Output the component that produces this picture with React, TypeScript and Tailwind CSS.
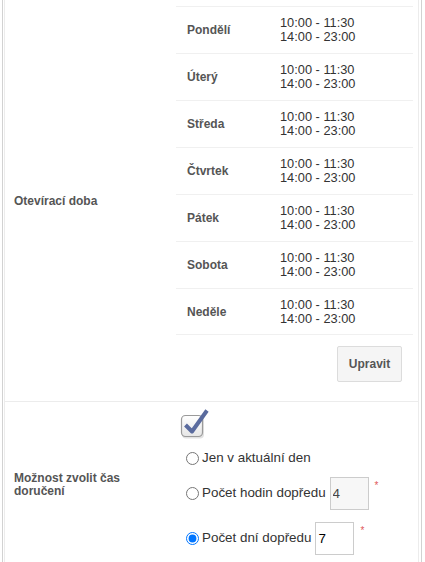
import React from "react";

const days = ["Pondělí", "Úterý", "Středa", "Čtvrtek", "Pátek", "Sobota", "Neděle"];

const CheckIcon = () => (
  <svg width="32" height="32" viewBox="0 0 32 32" className="block">
    <defs>
      <linearGradient id="cbg" x1="0" y1="0" x2="0" y2="1">
        <stop offset="0" stopColor="#ffffff" />
        <stop offset="1" stopColor="#e6e6e6" />
      </linearGradient>
    </defs>
    <rect x="4" y="9.5" width="22" height="22" rx="4" fill="#cfcfcf" opacity="0.6" />
    <rect x="3.5" y="8.5" width="21" height="21" rx="4" fill="url(#cbg)" stroke="#9a9a9a" strokeWidth="1.2" />
    <path d="M7.5 18 L14 24.5 L29 3.5" fill="none" stroke="#5a6b9e" strokeWidth="4" strokeLinejoin="round" />
  </svg>
);

const Radio = ({ checked }: { checked?: boolean }) => (
  <input type="radio" readOnly checked={!!checked} className="m-0 w-[13px] h-[13px] shrink-0" />
);

export default function App() {
  return (
    <div className="h-[562px] overflow-hidden bg-white font-['Liberation_Sans',Arial,sans-serif]">
      <div className="ml-[2px] w-[420px] border-x border-[#d2d2d2] pl-[1px] pr-[2px]">
        <div className="border-x border-[#ececec]">
          {/* Opening hours */}
          <div className="flex border-b border-[#ececec]">
            <div className="w-[171px] flex items-center pl-[9px] text-[12px] font-bold text-[#555]">
              Otevírací doba
            </div>
            <div className="flex-1 pr-[5px]">
              <div className="h-[6px]" />
              {days.map((d, i) => (
                <div
                  key={d}
                  className={`flex items-center h-[47px] border-t border-[#f0f0f0] ${i === days.length - 1 ? "border-b" : ""}`}
                >
                  <div className="w-[104px] pl-[11px] text-[12px] font-bold text-[#555]">{d}</div>
                  <div className="text-[12.8px] leading-[14px] text-[#333]">
                    <div>10:00 - 11:30</div>
                    <div>14:00 - 23:00</div>
                  </div>
                </div>
              ))}
              <div className="flex justify-end pt-[11px] pb-[19px] pr-[11px]">
                <button className="w-[65px] h-[36px] bg-[#f5f5f5] border border-[#dcdcdc] rounded-[2px] text-[12px] font-bold text-[#555]">
                  Upravit
                </button>
              </div>
            </div>
          </div>

          {/* Delivery time */}
          <div className="flex">
            <div className="w-[171px] flex items-center pl-[9px] pr-[20px] text-[12px] leading-[13px] font-bold text-[#555]">
              Možnost zvolit čas doručení
            </div>
            <div className="flex-1 pt-[5px] pb-[13px]">
              <div className="ml-[2px]">
                <CheckIcon />
              </div>
              <div className="flex items-center h-[20px] mt-[9px] ml-[10px] text-[13.4px] text-[#333]">
                <Radio />
                <span className="ml-[3px]">Jen v aktuální den</span>
              </div>
              <div className="flex items-center h-[33px] mt-[9px] ml-[10px] text-[13.4px] text-[#333]">
                <Radio />
                <span className="ml-[3px]">Počet hodin dopředu</span>
                <input
                  readOnly
                  value="4"
                  className="ml-[4px] w-[39px] h-[33px] border border-[#cccccc] bg-[#f7f7f7] px-[2px] text-[13.4px] text-[#444] outline-none"
                />
                <span className="self-start ml-[6px] mt-[1px] text-[10px] text-[#e05a5a]">*</span>
              </div>
              <div className="flex items-center h-[33px] mt-[12px] ml-[10px] text-[13.4px] text-[#333]">
                <Radio checked />
                <span className="ml-[3px]">Počet dní dopředu</span>
                <input
                  readOnly
                  value="7"
                  className="ml-[4px] w-[39px] h-[33px] border border-[#cccccc] bg-white px-[2px] text-[13.4px] text-black outline-none"
                />
                <span className="self-start ml-[6px] mt-[1px] text-[10px] text-[#e05a5a]">*</span>
              </div>
            </div>
          </div>
        </div>
      </div>
    </div>
  );
}
